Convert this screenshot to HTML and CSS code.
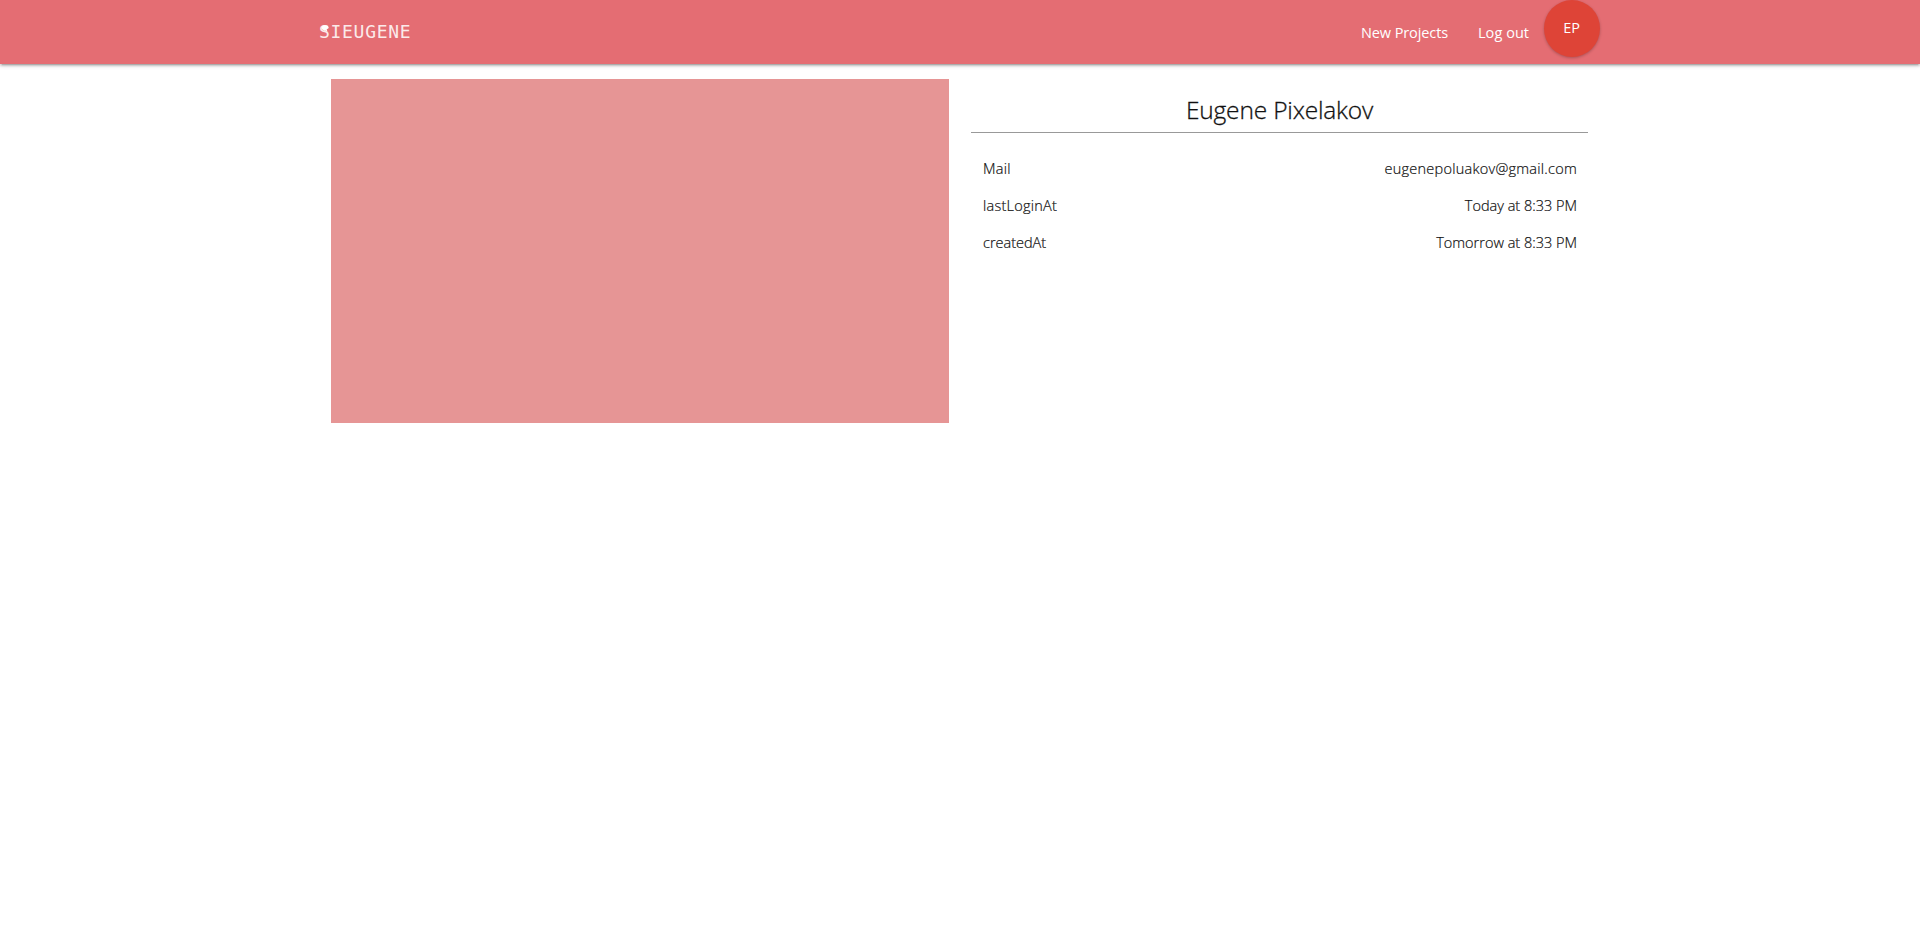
FILE: index.html
```html
<!DOCTYPE html>
<html lang="en">
<head>
<meta charset="utf-8">
<title>Sieugene</title>
<link rel="stylesheet" href="styles.css">
</head>
<body>
<nav class="navbar">
  <div class="container navbar-inner">
    <a class="logo">SIEUGENE<svg class="logo-mark" viewBox="0 0 8 8" width="8" height="8"><path d="M1.2 1.2C2.3-.2 5.7-.2 7 1.2C8.2 2.4 7.6 3.8 6.2 4.1C5.4 4.5 5.7 5.6 6.6 6.2C4.6 6.3 3.4 5.8 2.6 5C.6 4.8-.1 2.7 1.2 1.2Z" fill="#fff"/></svg></a>
    <ul class="menu">
      <li><a class="link link-projects">New Projects</a></li>
      <li><a class="link link-logout">Log out</a></li>
      <li><a class="avatar"><span class="initials">EP</span></a></li>
    </ul>
  </div>
</nav>
<main class="container dashboard">
  <section class="picture"></section>
  <section class="profile">
    <h1 class="name"><span>Eugene Pixelakov</span></h1>
    <dl class="details">
      <div class="detail"><dt class="t-mail">Mail</dt><dd class="t-address">eugenepoluakov@gmail.com</dd></div>
      <div class="detail"><dt class="t-login">lastLoginAt</dt><dd class="t-today">Today at 8:33 PM</dd></div>
      <div class="detail"><dt class="t-created">createdAt</dt><dd class="t-tomorrow">Tomorrow at 8:33 PM</dd></div>
    </dl>
  </section>
</main>
</body>
</html>
```
FILE: styles.css
```css
* { box-sizing: border-box; }
body {
  margin: 0;
  background: #fff;
  color: #111;
  font: 15px/22px "Open Sans", "Noto Sans", sans-serif;
}
.container { width: 1280px; margin: 0 auto; }
.navbar {
  height: 64px;
  background: #e46d73;
  color: #fff;
  box-shadow: 0 2px 2px 0 rgba(0,0,0,.14), 0 3px 1px -2px rgba(0,0,0,.12), 0 1px 5px 0 rgba(0,0,0,.2);
}
.navbar-inner { display: flex; justify-content: space-between; }
.logo {
  position: relative;
  margin-left: -1px;
  font: 18px/63px "DejaVu Sans Mono", monospace;
  letter-spacing: 0.7px;
  color: #fbeaea;
}
.logo-mark { position: absolute; left: 2px; top: 25px; }
.menu { display: flex; margin: 0; padding: 0; list-style: none; }
.link { display: block; padding: 0 15px; font-size: 14.5px; line-height: 65px; white-space: nowrap; }
.link-projects { width: 117px; letter-spacing: -0.1px; }
.link-logout { width: 81px; letter-spacing: 0.05px; }
.avatar {
  display: block;
  width: 56px;
  height: 57px;
  border-radius: 50%;
  background: #de4437;
  text-align: center;
  font-size: 14.5px;
  line-height: 56px;
  box-shadow: 0 1px 3px rgba(0,0,0,.25);
}
.initials { letter-spacing: -0.2px; margin-right: 1px; }
.dashboard { display: grid; grid-template-columns: 618px 617px; gap: 22px; padding: 15px 11px; }
.picture { height: 344px; background: #e69595; }
.name {
  height: 54px;
  margin: 0;
  padding-top: 14px;
  border-bottom: 1px solid #999;
  text-align: center;
  font-size: 24.5px;
  font-weight: 300;
  line-height: 34px;
  letter-spacing: -0.18px;
  -webkit-text-stroke: 0.3px #111;
}
.details {
  margin: 17px 0 0;
  padding: 0 11px 0 12px;
  font-size: 14.5px;
  font-weight: 300;
  -webkit-text-stroke: 0.2px #111;
}
.detail { display: flex; justify-content: space-between; height: 37px; line-height: 37px; }
.detail dd { margin: 0; }
.t-mail, .t-login { letter-spacing: 0.25px; }
.t-address { letter-spacing: 0.25px; }
```
